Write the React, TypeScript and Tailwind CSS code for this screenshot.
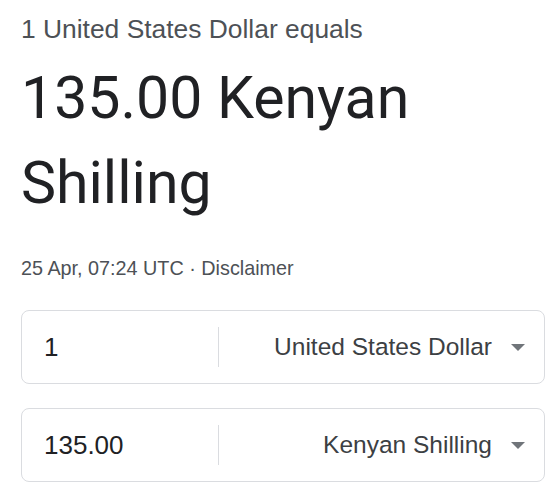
import React from 'react';

function Caret() {
  return (
    <svg width="14" height="7" viewBox="0 0 14 7" className="shrink-0">
      <path d="M0 0 L14 0 L7 7 Z" fill="#70757a" />
    </svg>
  );
}

function CurrencyRow({ amount, currency }: { amount: string; currency: string }) {
  return (
    <div className="h-[74px] border border-[#dadce0] rounded-[8px] flex items-center">
      <div className="w-[196px] pl-[22px] text-[26px] text-[#202124]">{amount}</div>
      <div className="w-px h-[40px] bg-[#dadce0]" />
      <div className="flex-1 flex items-center justify-end pr-[19px]">
        <span className="text-[24.5px] text-[#3c4043]">{currency}</span>
        <span className="ml-[19px] flex">
          <Caret />
        </span>
      </div>
    </div>
  );
}

export default function App() {
  return (
    <div className="bg-white w-[556px] h-[487px] pl-[21px] pr-[11px] pt-[14px] font-['Liberation_Sans',Arial,sans-serif]">
      <div className="text-[26.4px] leading-[30px] text-[#4d5156]">1 United States Dollar equals</div>
      <div className="mt-[11px] font-['Roboto',sans-serif] text-[59px] leading-[85px] text-[#202124]">
        135.00 Kenyan Shilling
      </div>
      <div className="mt-[32px] text-[19.8px] leading-[22px] text-[#4d5156]">
        25 Apr, 07:24 UTC · Disclaimer
      </div>
      <div className="mt-[31px] flex flex-col gap-[24px]">
        <CurrencyRow amount="1" currency="United States Dollar" />
        <CurrencyRow amount="135.00" currency="Kenyan Shilling" />
      </div>
    </div>
  );
}
